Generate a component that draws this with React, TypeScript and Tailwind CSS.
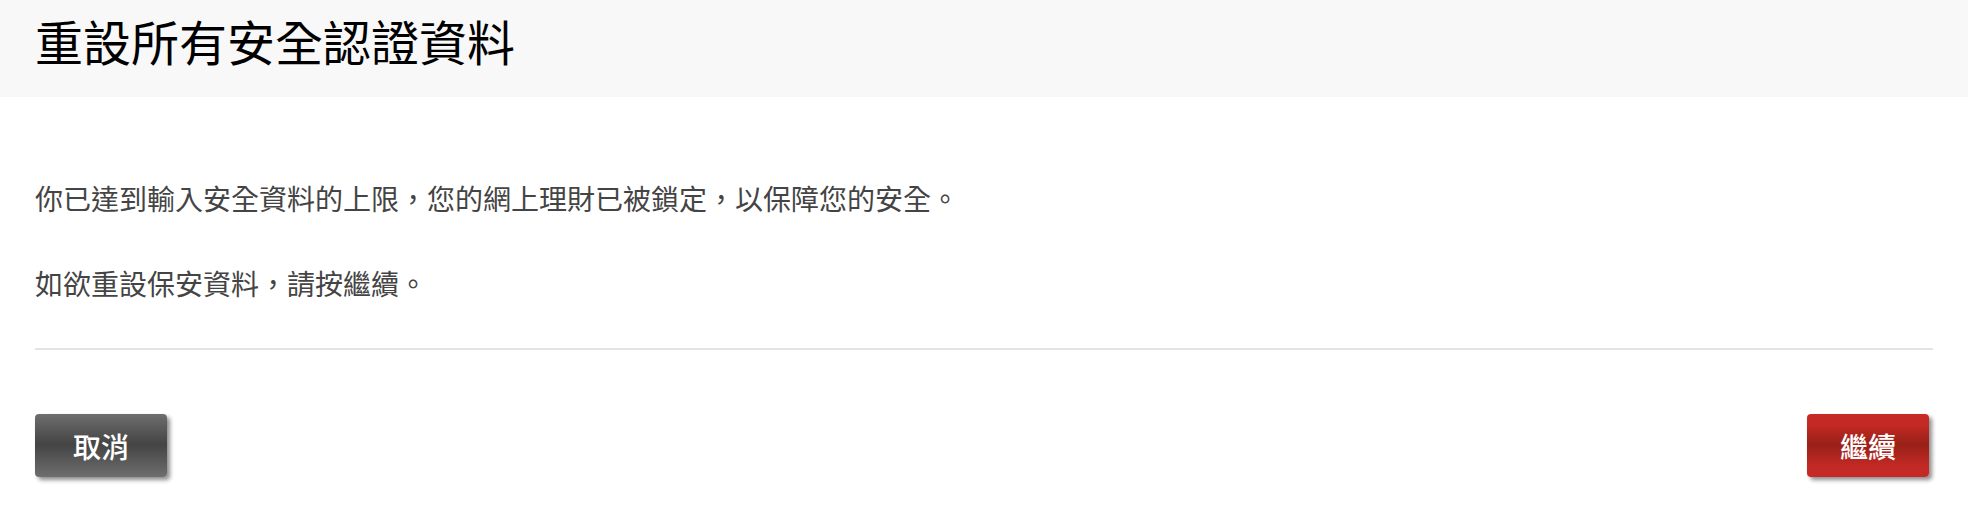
import React from "react";

const font = { fontFamily: '"Noto Sans CJK TC", "Noto Sans", sans-serif' };

export default function App() {
  return (
    <div className="min-h-[530px] bg-white" style={font}>
      {/* Title bar */}
      <header className="h-[97px] bg-[#f8f8f8] px-[35px] pt-[16px]">
        <h1 className="text-[48px] leading-[48px] font-normal text-black">
          重設所有安全認證資料
        </h1>
      </header>

      <main className="px-[35px]">
        <p className="mt-[87px] text-[28px] leading-[28px] text-[#444]">
          你已達到輸入安全資料的上限，您的網上理財已被鎖定，以保障您的安全。
        </p>
        <p className="mt-[57px] text-[28px] leading-[28px] text-[#444]">
          如欲重設保安資料，請按繼續。
        </p>

        <div className="mt-[51px] h-[2px] bg-[#e3e3e3]" />

        <div className="mt-[64px] flex items-center justify-between pr-[4px]">
          <button className="h-[63px] w-[132px] rounded-[4px] bg-[linear-gradient(to_bottom,#6e6e6e_0%,#444444_48%,#6e6e6e_100%)] text-[28px] font-medium text-white shadow-[3px_3px_4px_rgba(0,0,0,0.45)]">
            取消
          </button>
          <button className="h-[63px] w-[122px] rounded-[4px] bg-[linear-gradient(to_bottom,#c82a27_0%,#c22925_18%,#982117_48%,#c22925_82%,#c62a27_100%)] text-[28px] font-medium text-white shadow-[3px_3px_4px_rgba(0,0,0,0.45)]">
            繼續
          </button>
        </div>
      </main>
    </div>
  );
}
